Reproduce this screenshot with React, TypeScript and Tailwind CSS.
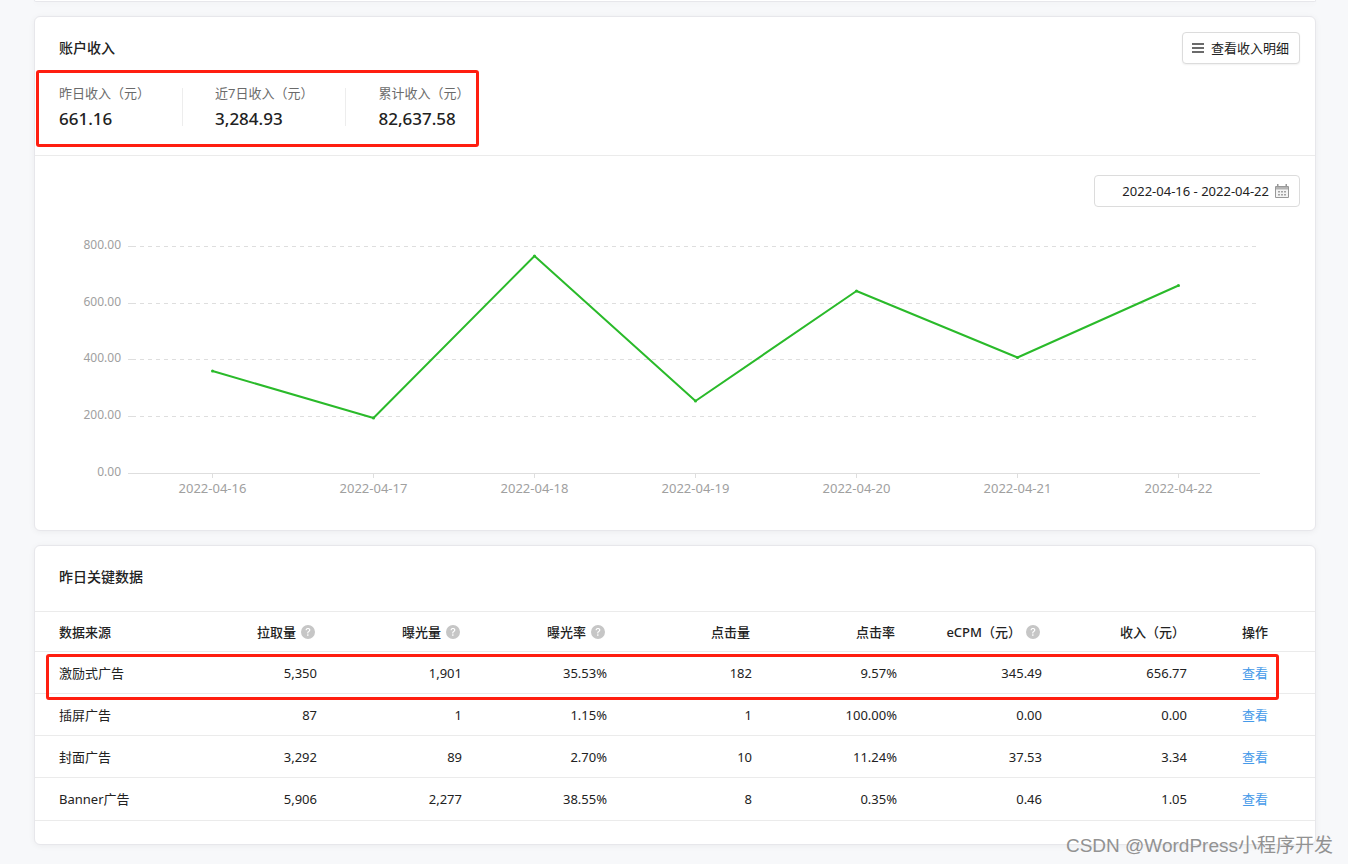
import { BsQuestionCircleFill } from "react-icons/bs";

const stats = [
  { label: "昨日收入（元）", value: "661.16" },
  { label: "近7日收入（元）", value: "3,284.93" },
  { label: "累计收入（元）", value: "82,637.58" },
];

const points = [
  { date: "2022-04-16", x: 177.5, y: 164 },
  { date: "2022-04-17", x: 338.5, y: 211 },
  { date: "2022-04-18", x: 499.5, y: 49 },
  { date: "2022-04-19", x: 660.5, y: 194 },
  { date: "2022-04-20", x: 821.5, y: 84 },
  { date: "2022-04-21", x: 982.5, y: 150.5 },
  { date: "2022-04-22", x: 1143.5, y: 78.5 },
];

const gridLines = [
  { label: "800.00", y: 39.5 },
  { label: "600.00", y: 96.5 },
  { label: "400.00", y: 152.5 },
  { label: "200.00", y: 209.5 },
];

const columns = [
  { name: "拉取量", help: true },
  { name: "曝光量", help: true },
  { name: "曝光率", help: true },
  { name: "点击量", help: false },
  { name: "点击率", help: false },
  { name: "eCPM（元）", help: true },
  { name: "收入（元）", help: false },
];

const rows = [
  { source: "激励式广告", cells: ["5,350", "1,901", "35.53%", "182", "9.57%", "345.49", "656.77"] },
  { source: "插屏广告", cells: ["87", "1", "1.15%", "1", "100.00%", "0.00", "0.00"] },
  { source: "封面广告", cells: ["3,292", "89", "2.70%", "10", "11.24%", "37.53", "3.34"] },
  { source: "Banner广告", cells: ["5,906", "2,277", "38.55%", "8", "0.35%", "0.46", "1.05"] },
];

function MenuIcon() {
  return (
    <svg width="12" height="10" viewBox="0 0 12 10" aria-hidden="true" fill="#6b6b6b">
      <path d="M0 0h12v2H0zM0 4h12v2H0zM0 8h12v2H0z" />
    </svg>
  );
}

function CalendarIcon() {
  return (
    <svg width="14" height="14" viewBox="0 0 14 14" aria-hidden="true">
      <path d="M0.5 2.5h13v11h-13z" fill="#f4f4f4" stroke="#989898" />
      <path d="M1 3h12v2.5H1z" fill="#b4b4b4" />
      <path d="M2 0h1.5v3H2zM10.5 0H12v3h-1.5z" fill="#989898" />
      <path
        d="M3 7h2v1.5H3zM6 7h2v1.5H6zM9 7h2v1.5H9zM3 10h2v1.5H3zM6 10h2v1.5H6zM9 10h2v1.5H9z"
        fill="#a4a4a4"
      />
    </svg>
  );
}

function IncomeChart() {
  return (
    <svg viewBox="0 0 1280 323" className="block w-full" role="img" aria-label="账户收入">
      {gridLines.map((line) => (
        <g key={line.label}>
          <path d={`M93 ${line.y}h4`} stroke="#dedede" />
          <path d={`M97 ${line.y}H1221`} stroke="#dedede" strokeDasharray="4 4" />
          <text x="86" y={line.y + 2} textAnchor="end" fontSize="12" fill="#a0a0a0">
            {line.label}
          </text>
        </g>
      ))}
      <path d="M93 266.5H1225" stroke="#dedede" />
      <text x="86" y="269" textAnchor="end" fontSize="12" fill="#a0a0a0">
        0.00
      </text>
      {points.map((p) => (
        <g key={p.date}>
          <path d={`M${p.x} 267v4`} stroke="#dedede" />
          <text x={p.x} y="286" textAnchor="middle" fontSize="13" fill="#a0a0a0">
            {p.date}
          </text>
        </g>
      ))}
      <polyline
        points={points.map((p) => `${p.x},${p.y}`).join(" ")}
        fill="none"
        stroke="#2aba2a"
        strokeWidth="2"
        strokeLinejoin="bevel"
      />
      {points.map((p) => (
        <circle key={p.date} cx={p.x} cy={p.y} r="1.5" fill="#2aba2a" />
      ))}
    </svg>
  );
}

export default function App() {
  return (
    <main className="relative min-h-screen overflow-hidden bg-[#f7f8fa] pr-8 pb-[19px] pl-[34px] font-['Noto_Sans','Noto_Sans_CJK_SC',sans-serif] text-[13px] leading-5 text-[#222]">
      <div className="h-0.5 rounded-b-md border border-t-0 border-[#e7e7eb] bg-white shadow-[0_1px_6px_rgba(0,0,0,0.05)]" />

      <section className="mt-[14px] rounded-md border border-[#e7e7eb] bg-white shadow-[0_1px_6px_rgba(0,0,0,0.05)]">
        <header className="border-b border-[#ebebeb] pt-[15px] pr-[15px] pb-6 pl-6">
          <div className="flex h-8 items-center justify-between">
            <h2 className="text-sm font-medium">账户收入</h2>
            <button
              type="button"
              className="flex h-8 items-center gap-[7px] rounded border border-[#dcdcdc] bg-white pr-[10px] pl-[9px] shadow-[0_1px_2px_rgba(0,0,0,0.06)]"
            >
              <MenuIcon />
              查看收入明细
            </button>
          </div>
          <div className="relative mt-[19px] flex w-fit items-center gap-8">
            {stats.map((s, i) => (
              <div key={s.label} className="flex items-center gap-8">
                {i > 0 && <span className="h-[38px] w-px bg-[#ededed]" />}
                <div>
                  <p className="text-[#6b6b6b]">{s.label}</p>
                  <p className="mt-1 text-[17px] leading-6 font-medium">{s.value}</p>
                </div>
              </div>
            ))}
            <span className="pointer-events-none absolute -top-[13px] -right-[10px] -bottom-4 -left-[23px] rounded-[3px] border-3 border-[#ff1e10]" />
          </div>
        </header>

        <div className="flex justify-end pt-[19px] pr-[15px]">
          <label className="flex h-8 w-[206px] items-center gap-1.5 rounded border border-[#dcdcdc] bg-white pr-[10px]">
            <input
              type="text"
              readOnly
              aria-label="日期范围"
              defaultValue="2022-04-16 - 2022-04-22"
              className="w-full min-w-0 bg-transparent text-right outline-none"
            />
            <span className="shrink-0">
              <CalendarIcon />
            </span>
          </label>
        </div>
        <IncomeChart />
      </section>

      <section className="mt-[14px] rounded-md border border-[#e7e7eb] bg-white pb-[23px] shadow-[0_1px_6px_rgba(0,0,0,0.05)]">
        <h2 className="px-6 pt-[19px] pb-[22px] text-sm leading-6 font-medium">昨日关键数据</h2>
        <table className="w-full table-fixed border-collapse">
          <colgroup>
            <col className="w-[149px]" />
            {columns.map((c) => (
              <col key={c.name} className="w-[145px]" />
            ))}
            <col className="w-[116px]" />
          </colgroup>
          <thead>
            <tr className="h-10 border-y border-[#ebebeb]">
              <th scope="col" className="pl-6 text-left font-medium">
                数据来源
              </th>
              {columns.map((c) => (
                <th key={c.name} scope="col" className="pr-[14px] font-medium">
                  <span className="flex items-center justify-end gap-[5px] whitespace-nowrap">
                    {c.name}
                    {c.help && <BsQuestionCircleFill size={14} color="#c6c6c6" />}
                  </span>
                </th>
              ))}
              <th scope="col" className="pl-[43px] text-left font-medium">
                操作
              </th>
            </tr>
          </thead>
          <tbody>
            {rows.map((r, i) => (
              <tr key={r.source} className="relative h-[42px] border-b border-[#ebebeb] last:h-[43px]">
                <td className="pl-6">
                  {r.source}
                  {i === 0 && (
                    <span className="pointer-events-none absolute top-0.5 right-9 -bottom-[7px] left-[11px] rounded-[3px] border-3 border-[#ff1e10]" />
                  )}
                </td>
                {r.cells.map((cell, j) => (
                  <td key={columns[j].name} className="pr-3 text-right">
                    {cell}
                  </td>
                ))}
                <td className="pl-[43px]">
                  <a href="#detail" className="text-[#459ae9]">
                    查看
                  </a>
                </td>
              </tr>
            ))}
          </tbody>
        </table>
      </section>

      <p className="pointer-events-none absolute right-[15px] bottom-1 font-['Liberation_Sans','Noto_Sans_CJK_SC',sans-serif] text-[19px] leading-7 text-[#929292]">
        CSDN @WordPress小程序开发
      </p>
    </main>
  );
}
